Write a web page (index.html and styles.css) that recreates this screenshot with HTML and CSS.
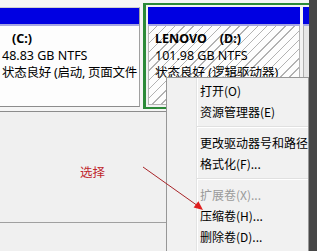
FILE: index.html
```html
<!DOCTYPE html>
<html lang="zh-CN">

<head>
    <title>磁盘管理</title>
    <meta charset="utf-8">
    <meta name="viewport" content="width=device-width, initial-scale=1">
    <link rel="stylesheet" href="styles.css">
</head>

<body>

    <div class="screen">

        <div class="view">

            <!-- disk row: primary C:, extended partition holding D: and the next logical drive -->
            <div class="disk">
                <div class="part part-c">
                    <div class="bar"></div>
                    <div class="info">
                        <div class="name"><span class="drive">(C:)</span></div>
                        <div>48.83 GB NTFS</div>
                        <div class="status">状态良好 (启动, 页面文件</div>
                    </div>
                </div>

                <div class="extended">
                    <div class="part part-d">
                        <div class="bar"></div>
                        <div class="info">
                            <div class="name">LENOVO<span class="drive">(D:)</span></div>
                            <div>101.98 GB NTFS</div>
                            <div>状态良好 (逻辑驱动器)</div>
                        </div>
                    </div>
                    <div class="part part-next">
                        <div class="bar"></div>
                        <div class="info"></div>
                    </div>
                </div>
            </div>

            <div class="lower"></div>

            <ul class="menu">
                <li>打开(O)</li>
                <li>资源管理器(E)</li>
                <li class="sep"></li>
                <li>更改驱动器号和路径</li>
                <li>格式化(F)...</li>
                <li class="sep"></li>
                <li class="disabled">扩展卷(X)...</li>
                <li>压缩卷(H)...</li>
                <li>删除卷(D)...</li>
            </ul>

            <div class="note">选择</div>

            <svg class="arrow" width="309" height="251" viewBox="0 0 309 251">
                <line x1="143" y1="167" x2="198" y2="206" stroke="#a82428" stroke-width="1" />
                <polygon points="203,210 193.6,207.6 198.4,201.2" fill="#e01e1e" />
            </svg>

        </div>

        <div class="edge"></div>

    </div>

</body>

</html>
```

FILE: styles.css
```css
body {
    margin: 0;
    background-color: #f0f0f0;
    font-family: "Noto Sans", "Noto Sans CJK SC", sans-serif;
    color: #000;
}

.screen {
    display: flex;
    width: 317px;
    height: 251px;
    overflow: hidden;
}

.view {
    position: relative;
    flex: none;
    width: 309px;
    overflow: hidden;
}

.edge {
    flex: 1;
    background-color: #474747;
}

/* disk row */

.disk {
    display: flex;
    height: 111px;
    background-color: #f5f5f5;
    border-bottom: 1px solid #8c8c8c;
}

.part {
    display: flex;
    flex-direction: column;
    box-sizing: border-box;
}

.part .bar {
    flex: none;
    height: 16px;
    background-color: #0000e2;
    border-bottom: 2px solid #a6a6e2;
}

.info {
    flex: 1;
    background-color: #fdfdfd;
    font-size: 12.5px;
    line-height: 17px;
    padding: 4px 0 0 3px;
    white-space: nowrap;
    overflow: hidden;
}

.info .name {
    font-weight: 700;
}

.part-c {
    flex: none;
    width: 140px;
    height: 100px;
    margin-top: 7px;
    border-top: 1px solid #cfcfcf;
    border-right: 1px solid #a0a0a0;
    border-bottom: 1px solid #8c8c8c;
}

.part-c .info {
    padding-left: 2px;
}

.part-c .drive {
    margin-left: 10px;
}

.part-c .status {
    letter-spacing: -0.25px;
}

.extended {
    flex: 1;
    display: flex;
    gap: 3px;
    box-sizing: border-box;
    height: 106px;
    margin: 3px 0 0 3px;
    padding: 2px 0 2px 2px;
    border: 2px solid #2b8a38;
    border-left-width: 3px;
    border-right: 0;
    background-color: #f2f2f2;
}

.part-d {
    flex: none;
    width: 152px;
}

.part-d .bar {
    height: 17px;
}

.part-d .info {
    padding-left: 6px;
    border: 1px solid #b4b4b4;
    border-top: 0;
    background: repeating-linear-gradient(135deg, #fdfdfd 0 5px, #b2b2b2 5px 6px, #fdfdfd 6px 6.5px);
}

.part-d .drive {
    margin-left: 13px;
}

.part-next {
    flex: 1;
}

.part-next .bar {
    height: 17px;
}

.part-next .info {
    background-color: #e6e6e6;
    border-left: 1px solid #b0b0b0;
}

/* lower panel */

.lower {
    height: 110px;
    border-bottom: 1px solid #a0a0a0;
}

/* context menu */

.menu {
    position: absolute;
    left: 166px;
    top: 77px;
    width: 143px;
    height: 190px;
    box-sizing: border-box;
    margin: 0;
    padding: 2px 0;
    list-style: none;
    border: 1px solid #979797;
    background: linear-gradient(to right, transparent 29px, #e2e3e3 29px 30px, #fff 30px 31px, transparent 31px), #f1f1f1;
    font-family: "Noto Sans CJK SC", sans-serif;
    font-size: 12px;
}

.menu li {
    height: 21px;
    line-height: 21px;
    padding-left: 33px;
    white-space: nowrap;
}

.menu li.sep {
    height: 0;
    margin: 4px 0 4px 30px;
    padding: 0;
    border-top: 1px solid #e0e0e0;
    border-bottom: 1px solid #fff;
}

.menu li.disabled {
    color: #9a9a9a;
}

/* annotation */

.note {
    position: absolute;
    left: 80px;
    top: 162px;
    color: #c0272d;
    font-family: "Noto Sans CJK SC", sans-serif;
    font-size: 12.5px;
}

.arrow {
    position: absolute;
    left: 0;
    top: 0;
    pointer-events: none;
}
```
